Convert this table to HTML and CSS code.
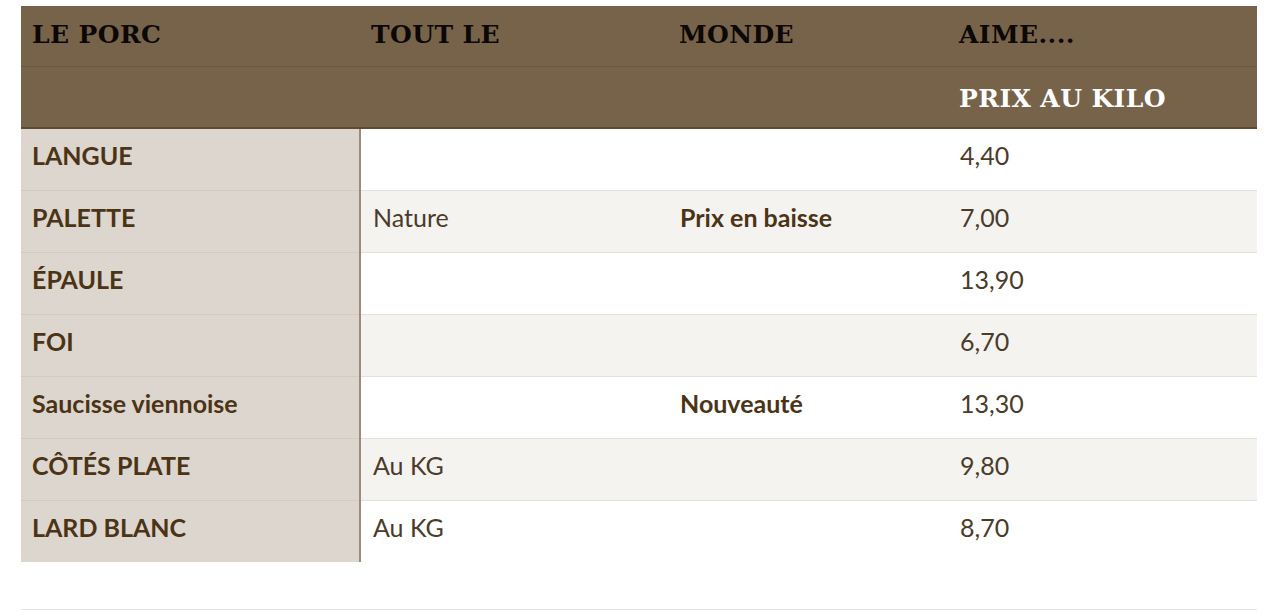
FILE: index.html
```html
<!DOCTYPE html>
<html lang="fr">
<head>
<meta charset="utf-8">
<title>Le porc</title>
<link rel="stylesheet" href="styles.css">
</head>
<body>
<div class="page">
  <table class="prices">
    <colgroup>
      <col class="c1"><col class="c2"><col class="c3"><col class="c4">
    </colgroup>
    <thead>
      <tr class="h1">
        <th>LE PORC</th><th>TOUT LE</th><th>MONDE</th><th>AIME....</th>
      </tr>
      <tr class="h2">
        <th></th><th></th><th></th><th>PRIX AU KILO</th>
      </tr>
    </thead>
    <tbody>
      <tr><td class="name">LANGUE</td><td></td><td></td><td>4,40</td></tr>
      <tr class="alt"><td class="name">PALETTE</td><td>Nature</td><td class="note">Prix en baisse</td><td>7,00</td></tr>
      <tr><td class="name">ÉPAULE</td><td></td><td></td><td>13,90</td></tr>
      <tr class="alt"><td class="name">FOI</td><td></td><td></td><td>6,70</td></tr>
      <tr><td class="name">Saucisse viennoise</td><td></td><td class="note">Nouveauté</td><td>13,30</td></tr>
      <tr class="alt"><td class="name">CÔTÉS PLATE</td><td>Au KG</td><td></td><td>9,80</td></tr>
      <tr><td class="name">LARD BLANC</td><td>Au KG</td><td></td><td>8,70</td></tr>
    </tbody>
  </table>
  <div class="rule"></div>
</div>
</body>
</html>
```
FILE: styles.css
```css
html, body {
  margin: 0;
  padding: 0;
  background: #ffffff;
}
.page {
  padding: 6px 23px 0 21px;
}
.prices {
  width: 100%;
  border-collapse: collapse;
  table-layout: fixed;
  font-family: "Lato", "Open Sans", sans-serif;
}
.c1 { width: 339px; }
.c2 { width: 308px; }
.c3 { width: 280px; }
.c4 { width: auto; }
.prices thead th {
  background: #77624a;
  text-align: left;
  font-family: "DejaVu Serif", "Liberation Serif", serif;
  font-weight: bold;
  font-size: 25px;
  letter-spacing: 0.4px;
  padding: 0 11px;
  line-height: 1;
}
.prices .h1 th {
  height: 57px;
  color: #0b0805;
  border-bottom: 1px solid #6c5842;
  vertical-align: middle;
  padding-bottom: 3px;
}
.prices .h2 th {
  height: 58px;
  color: #ffffff;
  border-bottom: 2px solid #5e4a34;
  vertical-align: middle;
  padding-top: 2px;
}
.prices td {
  height: 62px;
  padding: 0 12px 7px;
  font-size: 25px;
  line-height: 1;
  color: #4a3b2a;
  border-bottom: 1px solid #e4e1dc;
  vertical-align: middle;
  box-sizing: border-box;
}
.prices tbody tr:last-child td {
  border-bottom: none;
}
.prices tbody tr.alt td {
  background: #f5f3f0;
}
.prices td.name,
.prices tbody tr.alt td.name {
  background: #dcd6cf;
  color: #4b3416;
  font-weight: bold;
  border-right: 2px solid #9a8b7a;
  border-bottom-color: #d2cbc3;
  padding-left: 11px;
}
.prices td.note {
  font-weight: bold;
  color: #4b3416;
}
.rule {
  margin-top: 47px;
  height: 1px;
  background: #e6e4e1;
}
```
